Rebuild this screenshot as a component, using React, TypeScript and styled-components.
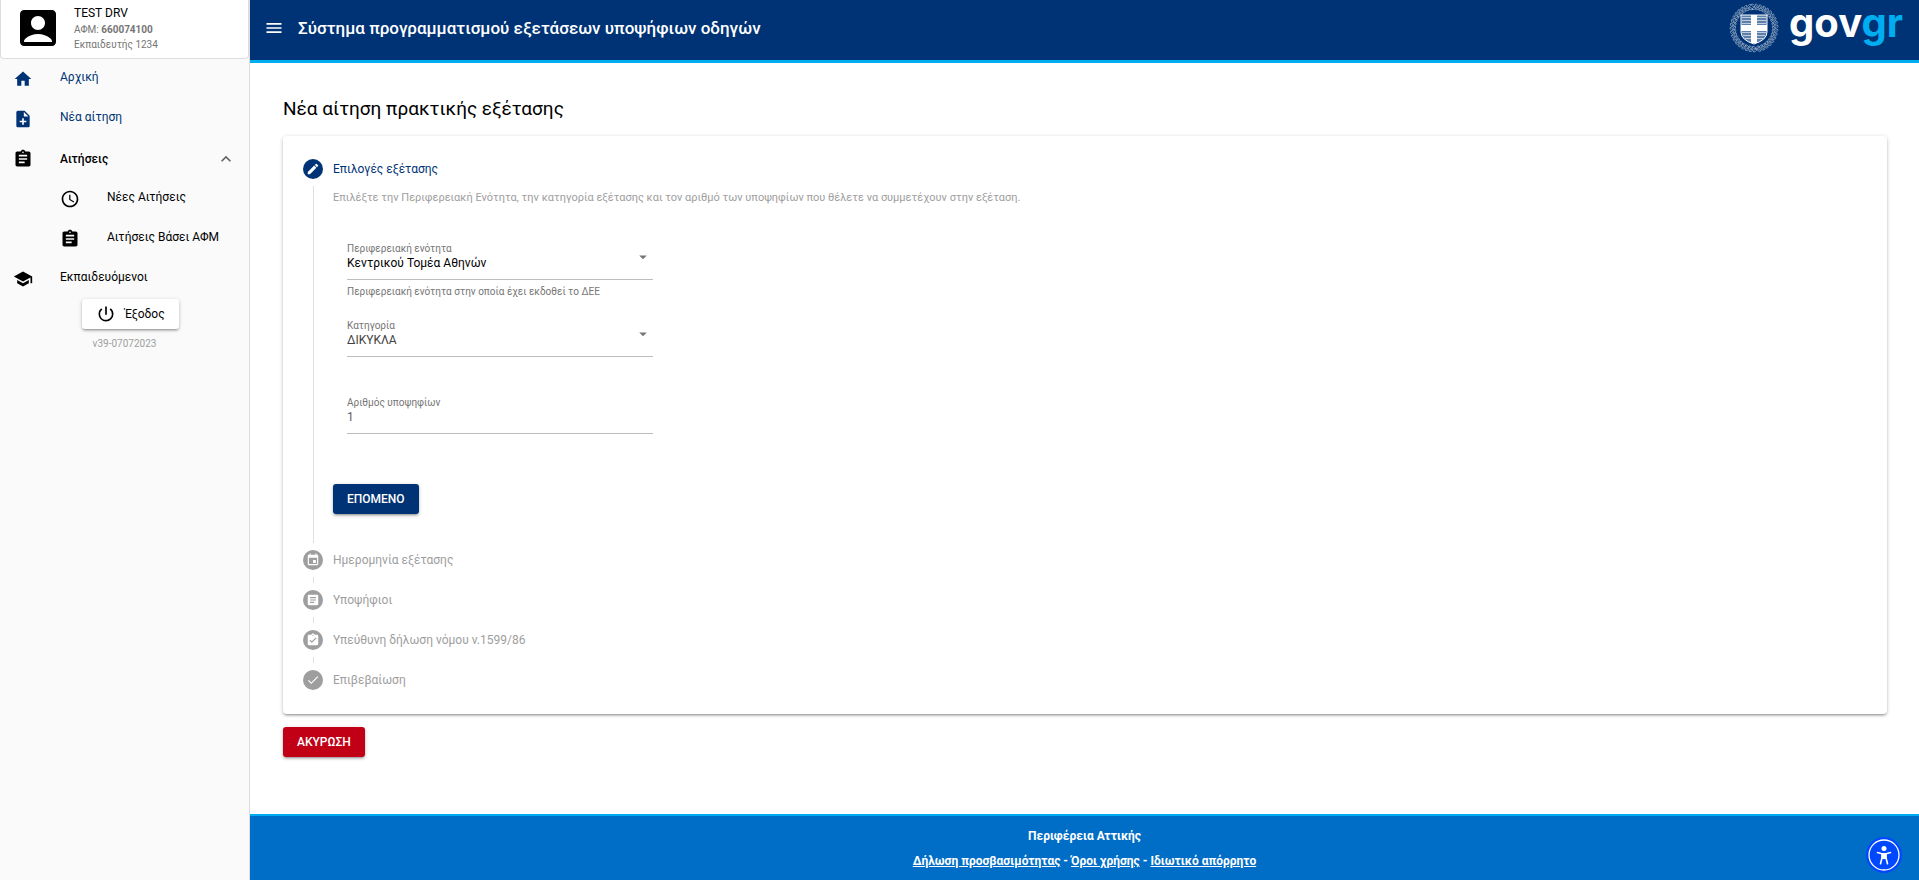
import React from "react";
import styled, { createGlobalStyle, css } from "styled-components";
import {
  MdHome, MdNoteAdd, MdAssignment, MdAccessTime, MdSchool, MdAccountBox, MdExpandLess,
  MdPowerSettingsNew, MdMenu, MdEdit, MdArrowDropDown, MdEvent, MdArticle, MdAssignmentTurnedIn, MdCheck,
} from "react-icons/md";

const GlobalStyle = createGlobalStyle`
  *, *::before, *::after { box-sizing: border-box; }
  body { margin: 0; font-family: Roboto, "Liberation Sans", sans-serif; font-size: 12px; line-height: 18px; color: #000; background: #fff; }
  button, input, select { font: inherit; color: inherit; }
  h1, h2, p, ul, ol { margin: 0; padding: 0; font-weight: 400; }
  ul, ol { list-style: none; }
  svg { display: block; flex: none; }
`;

const Page = styled.div`
  display: grid;
  grid-template-columns: 250px 1fr;
  min-height: 100vh;
`;

const Sidebar = styled.aside`
  background: #fafafa;
  border-right: 1px solid #ddd;
`;

const Profile = styled.div`
  display: flex;
  align-items: flex-start;
  gap: 12px;
  height: 59px;
  padding: 4px 13px 0;
  background: #fff;
  border: 1px solid #ddd;
  border-top: 0;
  border-radius: 0 0 4px 4px;
`;

const ProfileText = styled.div`
  display: flex;
  flex-direction: column;
`;

const Muted = styled.span`
  font-size: 10px;
  line-height: 15px;
  color: #757575;
`;

const NavLink = styled.a<{ $nested?: boolean; $brand?: boolean }>`
  display: flex;
  align-items: center;
  gap: 27px;
  height: 40px;
  padding: 0 13px 0 ${(p) => (p.$nested ? 60 : 13)}px;
  color: ${(p) => (p.$brand ? "#003375" : "#000")};
  text-decoration: none;
  span { flex: 1; padding-bottom: 4px; }
`;

const GroupToggle = styled.button`
  display: flex;
  align-items: center;
  gap: 27px;
  width: 100%;
  height: 40px;
  padding: 0 13px;
  border: 0;
  background: none;
  text-align: left;
  font-weight: 500;
  span { flex: 1; }
`;

const raised = css`
  box-shadow: 0 1px 4px rgba(0, 0, 0, 0.2), 0 2px 2px rgba(0, 0, 0, 0.14), 0 3px 1px -2px rgba(0, 0, 0, 0.12);
`;

const Button = styled.button<{ $tone?: "brand" | "danger" }>`
  display: flex;
  align-items: center;
  justify-content: center;
  gap: 8px;
  height: 30px;
  padding: 0 14px;
  border: 0;
  border-radius: 3px;
  font-weight: ${(p) => (p.$tone ? 500 : 400)};
  color: ${(p) => (p.$tone ? "#fff" : "#000")};
  background: ${(p) => (p.$tone === "brand" ? "#003375" : p.$tone === "danger" ? "#c10015" : "#fff")};
  ${raised}
`;

const SidebarEnd = styled.div`
  display: flex;
  flex-direction: column;
  align-items: center;
  padding: 0 0 0 12px;
`;

const Version = styled(Muted)`
  margin: 7px 12px 0 0;
  color: #9e9e9e;
`;

const Content = styled.div`
  display: flex;
  flex-direction: column;
  min-width: 0;
`;

const Header = styled.header`
  display: flex;
  align-items: center;
  height: 63px;
  padding: 0 16px 0 14px;
  color: #fff;
  background: #003375;
  border-bottom: 3px solid #00adf0;
`;

const AppTitle = styled.h1`
  flex: 1;
  margin: 0 0 4px 14px;
  font-size: 17px;
  line-height: 24px;
  font-weight: 500;
`;

const MenuButton = styled.button`
  padding: 0;
  margin-bottom: 4px;
  border: 0;
  background: none;
`;

const Brand = styled.a`
  display: flex;
  align-items: center;
  gap: 10px;
  height: 60px;
  padding-bottom: 4px;
  color: #fff;
  text-decoration: none;
`;

const Wordmark = styled.span`
  padding-bottom: 10px;
  font-family: Inter, sans-serif;
  font-size: 40px;
  line-height: 44px;
  font-weight: 700;
  span { color: #00adf0; }
`;

const Main = styled.main`
  flex: 1;
  padding: 32px 32px 48px 33px;
`;

const PageTitle = styled.h2`
  margin-bottom: 13px;
  font-size: 19px;
  line-height: 28px;
`;

const Card = styled.section`
  margin-bottom: 13px;
  padding: 13px 20px 14px;
  background: #fff;
  border-radius: 4px;
  ${raised}
`;

const Step = styled.li<{ $open?: boolean }>`
  display: grid;
  grid-template-columns: 20px 1fr;
  grid-template-rows: 40px auto;
  column-gap: 10px;
  color: ${(p) => (p.$open ? "#003375" : "#9e9e9e")};
`;

const StepMarker = styled.div<{ $first?: boolean; $last?: boolean }>`
  grid-row: 1 / -1;
  display: flex;
  flex-direction: column;
  align-items: center;
  gap: 7px;
  &::before { content: ""; width: 1px; height: 3px; background: ${(p) => (p.$first ? "transparent" : "#e0e0e0")}; }
  &::after { content: ""; width: 1px; flex: 1; background: ${(p) => (p.$last ? "transparent" : "#e0e0e0")}; }
`;

const Dot = styled.span<{ $open?: boolean }>`
  display: flex;
  align-items: center;
  justify-content: center;
  width: 20px;
  height: 20px;
  border-radius: 50%;
  color: #fff;
  background: ${(p) => (p.$open ? "#003375" : "#9e9e9e")};
`;

const StepTitle = styled.div`
  align-self: center;
`;

const StepBody = styled.form`
  padding-bottom: 26px;
  color: #9e9e9e;
`;

const Intro = styled.p`
  font-size: 11px;
`;

const Fields = styled.div`
  width: 334px;
  padding: 30px 14px 16px;
`;

const Field = styled.div`
  display: flex;
  flex-direction: column;
  height: 77px;
  padding-top: 4px;
`;

const Label = styled.label`
  height: 12px;
  font-size: 10px;
  line-height: 15px;
  color: #757575;
`;

const Control = styled.div`
  display: flex;
  align-items: center;
  height: 27px;
  padding-right: 1px;
  border-bottom: 1px solid #bdbdbd;
  color: #757575;
  select, input {
    appearance: none;
    flex: 1;
    min-width: 0;
    height: 18px;
    padding: 0;
    margin-bottom: 6px;
    border: 0;
    outline: 0;
    background: none;
  }
  svg { margin-bottom: 18px; }
`;

const Select = styled.select<{ $strong?: boolean }>`
  color: ${(p) => (p.$strong ? "#000" : "#424242")};
`;

const Input = styled.input`
  color: #616161;
`;

const Hint = styled.span`
  margin-top: 4px;
  font-size: 10px;
  line-height: 15px;
  color: #757575;
`;

const Footer = styled.footer`
  height: 66px;
  padding-top: 11px;
  border-top: 2px solid #00adf0;
  background: #006ec7;
  color: #fff;
  text-align: center;
  p { height: 25px; font-weight: 700; }
  a { color: inherit; }
`;

const AccessButton = styled.button`
  position: fixed;
  right: 17px;
  bottom: 7px;
  width: 36px;
  height: 36px;
  padding: 0;
  border: 0;
  background: none;
`;

const leaves = Array.from({ length: 36 }, (_, i) => i * 10);

const Emblem = () => (
  <svg width="50" height="50" viewBox="0 0 50 50" fill="none" stroke="#fff">
    {leaves.map((a) => (
      <g key={a} transform={`rotate(${a} 25 25)`} strokeWidth="0.6" opacity="0.7">
        <ellipse cx="24" cy="2.4" rx="2" ry="0.9" transform={`rotate(${a < 180 ? 35 : -35} 24 2.4)`} />
        <ellipse cx="25" cy="5.4" rx="2" ry="0.9" transform={`rotate(${a < 180 ? -30 : 30} 25 5.4)`} />
      </g>
    ))}
    <path d="M12 12h26v17q0 8-13 12q-13-4-13-12z" fill="#5c7fab" strokeWidth="1" />
    <path d="M13 14.500h24M13 17.500h24M13 20.500h24M13 29.500h24M14 32.500h22M16 35.500h18" strokeWidth="1" opacity="0.6" />
    <path d="M25 12v28M12 25h26" strokeWidth="6" />
  </svg>
);

const AccessIcon = () => (
  <svg width="36" height="36" viewBox="0 0 36 36">
    <circle cx="18" cy="18" r="18" fill="#0048ff" />
    <circle cx="18" cy="18" r="15" fill="none" stroke="#fff" strokeWidth="1.300" />
    <circle cx="18" cy="11.500" r="2.500" fill="#fff" />
    <path d="M11.500 15.600l4.500 1.200v4l-1.500 6M24.500 15.600l-4.500 1.200v4l1.500 6" fill="none" stroke="#fff" strokeWidth="1.600" strokeLinecap="round" />
    <path d="M15.500 16h5v6h-5z" fill="#fff" />
  </svg>
);

const laterSteps = [
  { title: "Ημερομηνία εξέτασης", Icon: MdEvent },
  { title: "Υποψήφιοι", Icon: MdArticle },
  { title: "Υπεύθυνη δήλωση νόμου ν.1599/86", Icon: MdAssignmentTurnedIn },
  { title: "Επιβεβαίωση", Icon: MdCheck },
];

export default function App() {
  return (
    <>
      <GlobalStyle />
      <Page>
        <Sidebar>
          <Profile>
            <MdAccountBox size={48} />
            <ProfileText>
              <span>TEST DRV</span>
              <Muted>ΑΦΜ: <b>660074100</b></Muted>
              <Muted>Εκπαιδευτής 1234</Muted>
            </ProfileText>
          </Profile>
          <nav>
            <NavLink href="#home" $brand><MdHome size={20} /><span>Αρχική</span></NavLink>
            <NavLink href="#new" $brand><MdNoteAdd size={20} /><span>Νέα αίτηση</span></NavLink>
            <GroupToggle type="button" aria-expanded="true">
              <MdAssignment size={20} /><span>Αιτήσεις</span><MdExpandLess size={20} color="#616161" />
            </GroupToggle>
            <NavLink href="#recent" $nested><MdAccessTime size={20} /><span>Νέες Αιτήσεις</span></NavLink>
            <NavLink href="#by-afm" $nested><MdAssignment size={20} /><span>Αιτήσεις Βάσει ΑΦΜ</span></NavLink>
            <NavLink href="#trainees"><MdSchool size={20} /><span>Εκπαιδευόμενοι</span></NavLink>
          </nav>
          <SidebarEnd>
            <Button type="button"><MdPowerSettingsNew size={20} />Έξοδος</Button>
            <Version>v39-07072023</Version>
          </SidebarEnd>
        </Sidebar>
        <Content>
          <Header>
            <MenuButton type="button" aria-label="Μενού"><MdMenu size={20} /></MenuButton>
            <AppTitle>Σύστημα προγραμματισμού εξετάσεων υποψήφιων οδηγών</AppTitle>
            <Brand href="#govgr"><Emblem /><Wordmark>gov<span>gr</span></Wordmark></Brand>
          </Header>
          <Main>
            <PageTitle>Νέα αίτηση πρακτικής εξέτασης</PageTitle>
            <Card>
              <ol>
                <Step $open>
                  <StepMarker $first><Dot $open><MdEdit size={14} /></Dot></StepMarker>
                  <StepTitle>Επιλογές εξέτασης</StepTitle>
                  <StepBody>
                    <Intro>Επιλέξτε την Περιφερειακή Ενότητα, την κατηγορία εξέτασης και τον αριθμό των υποψηφίων που θέλετε να συμμετέχουν στην εξέταση.</Intro>
                    <Fields>
                      <Field>
                        <Label htmlFor="unit">Περιφερειακή ενότητα</Label>
                        <Control>
                          <Select id="unit" $strong><option>Κεντρικού Τομέα Αθηνών</option></Select>
                          <MdArrowDropDown size={18} />
                        </Control>
                        <Hint>Περιφερειακή ενότητα στην οποία έχει εκδοθεί το ΔΕΕ</Hint>
                      </Field>
                      <Field>
                        <Label htmlFor="category">Κατηγορία</Label>
                        <Control>
                          <Select id="category"><option>ΔΙΚΥΚΛΑ</option></Select>
                          <MdArrowDropDown size={18} />
                        </Control>
                      </Field>
                      <Field>
                        <Label htmlFor="count">Αριθμός υποψηφίων</Label>
                        <Control><Input id="count" defaultValue="1" /></Control>
                      </Field>
                    </Fields>
                    <Button type="button" $tone="brand">ΕΠΟΜΕΝΟ</Button>
                  </StepBody>
                </Step>
                {laterSteps.map(({ title, Icon }, i) => (
                  <Step key={title}>
                    <StepMarker $last={i === laterSteps.length - 1}><Dot><Icon size={14} /></Dot></StepMarker>
                    <StepTitle>{title}</StepTitle>
                  </Step>
                ))}
              </ol>
            </Card>
            <Button type="button" $tone="danger">ΑΚΥΡΩΣΗ</Button>
          </Main>
          <Footer>
            <p>Περιφέρεια Αττικής</p>
            <p><a href="#accessibility">Δήλωση προσβασιμότητας</a> - <a href="#terms">Όροι χρήσης</a> - <a href="#privacy">Ιδιωτικό απόρρητο</a></p>
          </Footer>
        </Content>
      </Page>
      <AccessButton type="button" aria-label="Προσβασιμότητα"><AccessIcon /></AccessButton>
    </>
  );
}
